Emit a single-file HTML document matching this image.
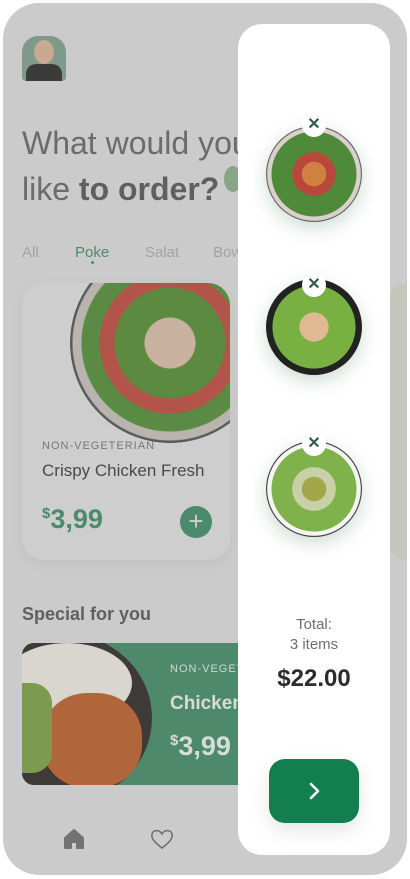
<!DOCTYPE html>
<html><head><style>
*{margin:0;padding:0;box-sizing:border-box}
body{width:410px;height:879px;background:#fff;font-family:"Liberation Sans",sans-serif;position:relative;overflow:hidden}
.ph{position:absolute;left:3px;top:3px;width:404px;height:872px;border-radius:36px;background:#cbcbcb;overflow:hidden}
.a{position:absolute;white-space:nowrap}
.t{color:#6b6b6b}
.panel{position:absolute;left:238px;top:24px;width:152px;height:831px;background:#fff;border-radius:24px}
.bowl{position:absolute;width:96px;height:96px;border-radius:50%;box-shadow:0 6px 18px rgba(60,120,80,.25)}
.x{position:absolute;width:24px;height:24px;border-radius:50%;background:#fff;color:#2f5d4a;font-size:16px;font-weight:bold;text-align:center;line-height:23px}
</style></head><body>
<div class="ph">
 <div class="a" style="left:19px;top:33px;width:44px;height:45px;border-radius:16px 16px 4px 4px;background:#7f9a8a;overflow:hidden">
  <div class="a" style="left:12px;top:4px;width:20px;height:24px;border-radius:50%;background:#c9a98f"></div>
  <div class="a" style="left:4px;top:28px;width:36px;height:20px;border-radius:10px 10px 0 0;background:#3a3a3a"></div>
 </div>
 <div class="a t" style="left:19px;top:117px;font-size:32px;line-height:46px">What would you<br>like <b style="color:#5f5f5f">to order?</b></div>
 <div class="a" style="left:221px;top:163px;width:18px;height:26px;border-radius:50%;background:#8aa487"></div>
 <div class="a" style="left:19px;top:241px;font-size:15px;color:#a3a3a3">All</div>
 <div class="a" style="left:72px;top:241px;font-size:15px;color:#4e8a6b">Poke</div>
 <div class="a" style="left:142px;top:241px;font-size:15px;color:#a3a3a3">Salat</div>
 <div class="a" style="left:210px;top:241px;font-size:15px;color:#a3a3a3">Bowl</div>
 <div class="a" style="left:88px;top:258px;width:3px;height:3px;border-radius:50%;background:#4e8a6b"></div>
 <div class="a" style="left:19px;top:280px;width:208px;height:277px;border-radius:22px;background:#cecece;overflow:hidden;box-shadow:0 4px 12px rgba(0,0,0,.05)">
  <div class="a" style="left:48px;top:-40px;width:200px;height:200px;border-radius:50%;background:radial-gradient(circle closest-side at 50% 50%,#c9b3a0 0 25%,#5c8a40 26% 55%,#b2544a 56% 70%,#5b8a44 71% 88%,#b9b4ae 89% 97%,#5a5a5a 98% 100%,transparent 100%)"></div>
  <div class="a t" style="left:20px;top:157px;font-size:11px;letter-spacing:1px;color:#777">NON-VEGETERIAN</div>
  <div class="a" style="left:20px;top:178px;font-size:17px;color:#4a4a4a">Crispy Chicken Fresh</div>
  <div class="a" style="left:20px;top:221px;font-size:27px;font-weight:bold;color:#4b8a6b"><sup style="font-size:15px">$</sup>3,99</div>
  <div class="a" style="left:158px;top:223px;width:32px;height:32px;border-radius:50%;background:#4b8a6b;color:#d0d0d0;font-size:26px;line-height:30px;text-align:center">+</div>
 </div>
 <div class="a" style="left:386px;top:280px;width:30px;height:277px;border-radius:22px;background:#c4c7bb"></div>
 <div class="a" style="left:19px;top:601px;font-size:18px;font-weight:bold;color:#5f5f5f">Special for you</div>
 <div class="a" style="left:19px;top:640px;width:240px;height:142px;border-radius:12px;background:#4e896c;overflow:hidden">
  <div class="a" style="left:-50px;top:-10px;width:180px;height:170px;border-radius:50%;background:#3d3a38"></div>
  <div class="a" style="left:-20px;top:0px;width:130px;height:80px;border-radius:50%;background:#d8d6cf"></div>
  <div class="a" style="left:20px;top:50px;width:100px;height:95px;border-radius:45%;background:#b0653a"></div>
  <div class="a" style="left:0;top:40px;width:30px;height:90px;background:#7c9a50;border-radius:0 20px 20px 0"></div>
  <div class="a" style="left:148px;top:20px;font-size:11px;letter-spacing:1px;color:#cfd9d3">NON-VEGETERIAN</div>
  <div class="a" style="left:148px;top:50px;font-size:19px;font-weight:bold;color:#d6ddd9">Chicken</div>
  <div class="a" style="left:148px;top:88px;font-size:27px;font-weight:bold;color:#d6ddd9"><sup style="font-size:15px">$</sup>3,99</div>
 </div>
 <svg class="a" style="left:60px;top:825px" width="22" height="22" viewBox="0 0 22 22"><path d="M2 10 L11 2 L20 10 V20 H14 V14 H8 V20 H2Z" fill="#727272" stroke="#727272" stroke-linejoin="round" stroke-width="2"/></svg>
 <svg class="a" style="left:147px;top:825px" width="24" height="22" viewBox="0 0 24 22"><path d="M12 20 C4 14 1 10 2 6 C3 2 9 1 12 6 C15 1 21 2 22 6 C23 10 20 14 12 20Z" fill="none" stroke="#727272" stroke-width="1.6"/></svg>
</div>
<div class="panel">
 <div class="bowl" style="left:28px;top:102px;background:radial-gradient(circle closest-side,#d08040 0 25%,#b9483c 26% 45%,#4f8a3a 46% 88%,#d9d2cc 89% 97%,#666 98% 100%)"></div>
 <div class="x" style="left:64px;top:89px">✕</div>
 <div class="bowl" style="left:28px;top:255px;background:radial-gradient(circle closest-side,#e0b992 0 30%,#79b042 31% 86%,#222 87% 100%)"></div>
 <div class="x" style="left:64px;top:249px">✕</div>
 <div class="bowl" style="left:28px;top:417px;background:radial-gradient(circle closest-side,#a2a84a 0 25%,#c8d0a8 26% 45%,#7fb24a 46% 88%,#f4f4f2 89% 97%,#444 98% 100%)"></div>
 <div class="x" style="left:64px;top:408px">✕</div>
 <div class="a" style="left:0;width:152px;top:591px;text-align:center;font-size:15px;color:#6f6f6f;line-height:20px">Total:<br>3 items</div>
 <div class="a" style="left:0;width:152px;top:641px;text-align:center;font-size:24px;font-weight:bold;color:#2c2c2c">$22.00</div>
 <div class="a" style="left:31px;top:735px;width:90px;height:64px;border-radius:16px;background:#147f4e;box-shadow:0 8px 20px rgba(0,0,0,.1)">
  <svg class="a" style="left:36px;top:23px" width="18" height="18" viewBox="0 0 18 18"><path d="M6 2 L13 9 L6 16" fill="none" stroke="#fff" stroke-width="2.6" stroke-linecap="round" stroke-linejoin="round"/></svg>
 </div>
</div>
</body></html>
